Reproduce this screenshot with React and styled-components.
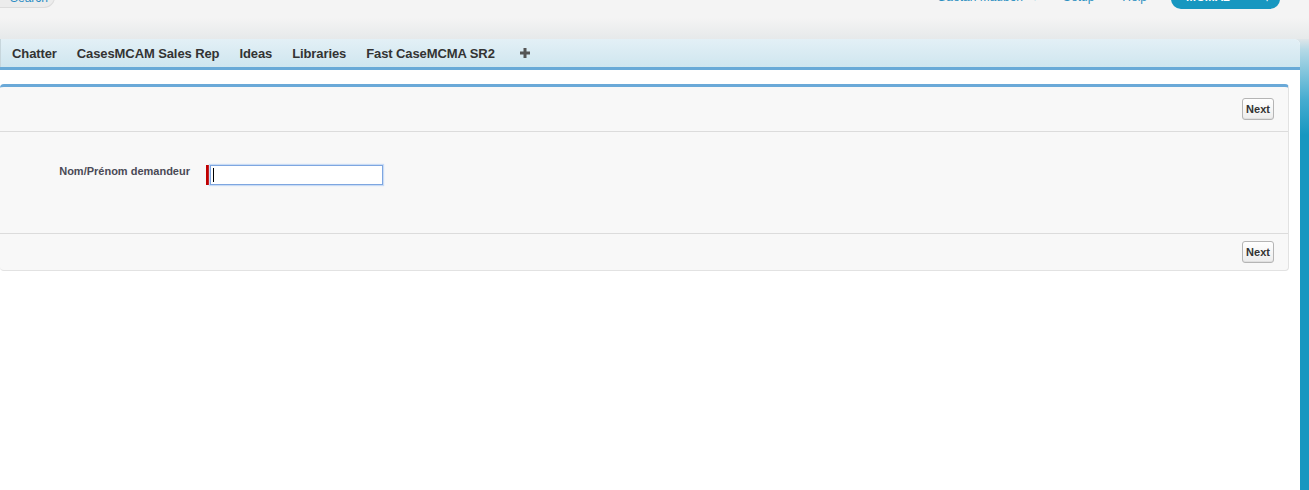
import React from "react";
import styled, { createGlobalStyle } from "styled-components";

const GlobalStyle = createGlobalStyle`
  html, body {
    margin: 0;
    padding: 0;
    background: #ffffff;
  }
  body {
    font-family: "Liberation Sans", Arial, sans-serif;
  }
`;

const Page = styled.div`
  width: 1309px;
  height: 490px;
  overflow: hidden;
  display: flex;
  flex-direction: column;
  background: linear-gradient(
    to bottom,
    #f4f4f4 0px,
    #f4f4f4 20px,
    #e3e7e9 38px,
    #b4d9e6 50px,
    #45acd0 100px,
    #1797c0 135px,
    #1797c0 100%
  );
`;

const Header = styled.div`
  height: 39px;
  flex-shrink: 0;
  overflow: hidden;
  display: flex;
  justify-content: space-between;
  align-items: flex-start;
  background: linear-gradient(to bottom, #f4f4f4 0, #f4f4f4 18px, #e6e9ea 39px);
`;

const SearchBox = styled.div`
  margin-top: -14px;
  width: 55px;
  height: 22px;
  box-sizing: border-box;
  padding: 4px 0 0 10px;
  background: #ececec;
  border: 1px solid #dcdcdc;
  border-left: none;
  border-radius: 0 12px 12px 0;
  color: #2b8cc4;
  font-size: 12px;
`;

const TopRight = styled.div`
  display: flex;
  align-items: flex-start;
  margin-right: 29px;
`;

const TopLink = styled.span`
  margin-top: -10px;
  margin-right: ${(p) => p.gap || 28}px;
  color: #2a8fc0;
  font-size: 12px;
  line-height: 14px;
  display: flex;
  align-items: flex-end;
  gap: 8px;
`;

const Caret = styled.span`
  font-size: 8px;
  line-height: 8px;
  margin-bottom: 1px;
  color: #9fd0e2;
`;

const AppButton = styled.div`
  margin-top: -14px;
  width: 109px;
  height: 23px;
  box-sizing: border-box;
  padding: 4px 10px 0 15px;
  background: #1797c0;
  border-radius: 10px;
  color: #ffffff;
  font-weight: bold;
  font-size: 12px;
  display: flex;
  justify-content: space-between;
`;

const Main = styled.div`
  flex: 1;
  margin-right: 9px;
  display: flex;
  flex-direction: column;
  background: #ffffff;
  border-top-right-radius: 6px;
`;

const TabBar = styled.div`
  height: 28px;
  display: flex;
  align-items: center;
  padding-left: 2px;
  background: linear-gradient(to bottom, #e3f0f6, #cfe6ef);
  border-bottom: 3px solid #69aad7;
  border-top-right-radius: 6px;
  box-shadow: inset 1px 0 0 #c7d6dc;
`;

const Tab = styled.div`
  padding: 0 10px;
  font-size: 13px;
  font-weight: bold;
  letter-spacing: -0.1px;
  color: #333333;
  white-space: nowrap;
`;

const PlusTab = styled(Tab)`
  padding-left: 15px;
  display: flex;
  align-items: center;
`;

const Panel = styled.div`
  margin: 14px 11px 0 0;
  background: #f8f8f8;
  border-top: 3px solid #6aa9d8;
  border-right: 1px solid #e2e2e2;
  border-bottom: 1px solid #e2e2e2;
  border-radius: 4px;
`;

const ButtonBar = styled.div`
  height: ${(p) => p.h}px;
  display: flex;
  align-items: center;
  justify-content: flex-end;
  padding-right: 14px;
  border-bottom: ${(p) => (p.divider ? "1px solid #dcdcdc" : "none")};
`;

const NextButton = styled.button`
  width: 32px;
  height: 22px;
  padding: 0;
  font-family: "Liberation Sans", Arial, sans-serif;
  font-size: 11px;
  font-weight: bold;
  color: #333333;
  background: linear-gradient(to bottom, #ffffff, #ededed);
  border: 1px solid #b5b5b5;
  border-radius: 3px;
  box-shadow: inset 0 -1px 0 #e0e0e0;
`;

const FormBody = styled.div`
  height: 102px;
  padding-top: 33px;
  box-sizing: border-box;
  border-bottom: 1px solid #dcdcdc;
`;

const FieldRow = styled.div`
  display: flex;
  align-items: center;
`;

const Label = styled.label`
  width: 190px;
  text-align: right;
  font-size: 11px;
  font-weight: bold;
  color: #4a4a56;
  margin-top: -8px;
`;

const RequiredWrap = styled.div`
  margin-left: 16px;
  display: flex;
  align-items: stretch;
`;

const RequiredBar = styled.div`
  width: 3px;
  background: #c00000;
  margin: 0 1px 0 0;
`;

const TextInput = styled.div`
  width: 169px;
  height: 18px;
  background: #ffffff;
  border: 1px solid #7ea6e0;
  box-shadow: 0 0 1px 1px #c9dcf5;
  display: flex;
  align-items: center;
  padding-left: 2px;
`;

const CursorLine = styled.span`
  width: 1px;
  height: 14px;
  background: #000000;
`;

const Plus = () => (
  <svg width="10" height="10" viewBox="0 0 10 10">
    <path d="M3.5 0h3v3.5H10v3H6.5V10h-3V6.5H0v-3h3.5z" fill="#555" />
  </svg>
);

const tabs = ["Chatter", "CasesMCAM Sales Rep", "Ideas", "Libraries", "Fast CaseMCMA SR2"];

export default function App() {
  return (
    <>
      <GlobalStyle />
      <Page>
        <Header>
          <SearchBox>Search</SearchBox>
          <TopRight>
            <TopLink gap={24}>
              Gaëtan Mauboh <Caret>▼</Caret>
            </TopLink>
            <TopLink>Setup</TopLink>
            <TopLink gap={24}>Help</TopLink>
            <AppButton>
              <span>MCMA2</span>
              <span>▾</span>
            </AppButton>
          </TopRight>
        </Header>
        <Main>
          <TabBar>
            {tabs.map((t) => (
              <Tab key={t}>{t}</Tab>
            ))}
            <PlusTab>
              <Plus />
            </PlusTab>
          </TabBar>
          <Panel>
            <ButtonBar h={44} divider>
              <NextButton>Next</NextButton>
            </ButtonBar>
            <FormBody>
              <FieldRow>
                <Label>Nom/Prénom demandeur</Label>
                <RequiredWrap>
                  <RequiredBar />
                  <TextInput>
                    <CursorLine />
                  </TextInput>
                </RequiredWrap>
              </FieldRow>
            </FormBody>
            <ButtonBar h={36}>
              <NextButton>Next</NextButton>
            </ButtonBar>
          </Panel>
        </Main>
      </Page>
    </>
  );
}
